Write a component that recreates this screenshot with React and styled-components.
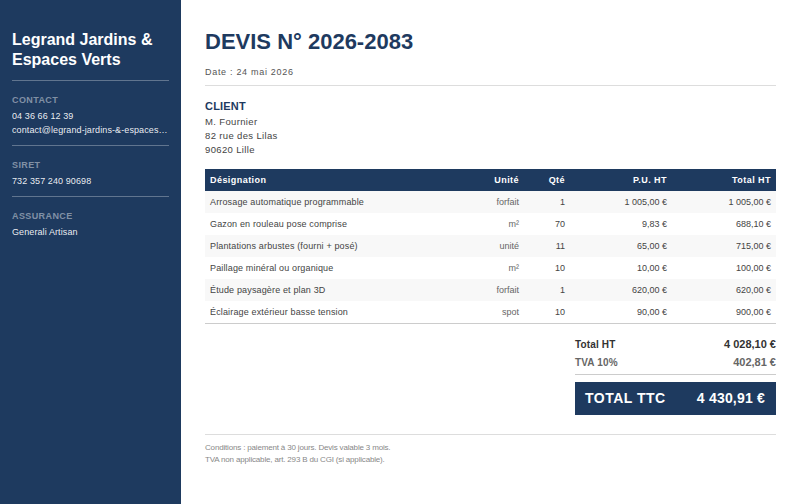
import React from 'react';
import styled, { createGlobalStyle } from 'styled-components';

const navy = '#1e3a5f';

const GlobalStyle = createGlobalStyle`
html, body { margin: 0; padding: 0; background: #fff; }
body { font-family: "Liberation Sans", Arial, sans-serif; }
* { box-sizing: border-box; }
`;

const Page = styled.div`
display: flex;
width: 800px;
height: 504px;
overflow: hidden;
`;

const Sidebar = styled.aside`
width: 181px;
flex-shrink: 0;
background: ${navy};
color: #fff;
padding: 30px 12px 0;
`;

const Company = styled.h2`
margin: 0;
font-size: 16px;
line-height: 20px;
font-weight: 700;
letter-spacing: 0;
padding-bottom: 10px;
`;

const SideBlock = styled.section`
border-top: 1px solid rgba(255, 255, 255, 0.3);
padding: 14px 0 7.5px;
`;

const SideLabel = styled.div`
font-size: 9px;
line-height: 11px;
font-weight: 700;
letter-spacing: 0.4px;
color: rgba(255, 255, 255, 0.45);
margin-bottom: 3px;
`;

const SideLine = styled.div`
font-size: 9px;
line-height: 14.4px;
letter-spacing: 0.1px;
color: rgba(255, 255, 255, 0.92);
white-space: nowrap;
overflow: hidden;
text-overflow: ellipsis;
`;

const Main = styled.main`
flex: 1;
min-width: 0;
padding: 28px 24px 0;
color: #333;
`;

const Title = styled.h1`
margin: 0;
font-size: 22px;
line-height: 28px;
font-weight: 700;
color: ${navy};
`;

const DateLine = styled.div`
font-size: 9px;
line-height: 12px;
letter-spacing: 0.7px;
color: #555;
margin-top: 10px;
padding-bottom: 7px;
border-bottom: 1px solid #ddd;
`;

const Client = styled.section`
margin-top: 14px;
`;

const ClientTitle = styled.div`
font-size: 11px;
line-height: 13px;
font-weight: 700;
letter-spacing: 0.2px;
color: ${navy};
margin-bottom: 2px;
`;

const ClientLine = styled.div`
font-size: 9.5px;
line-height: 14px;
letter-spacing: 0.35px;
color: #444;
`;

const Table = styled.table`
width: 100%;
margin-top: 12px;
border-collapse: collapse;
table-layout: fixed;
border-bottom: 1px solid #ccc;
`;

const Th = styled.th`
height: 22px;
padding: 0 5px;
background: ${navy};
color: #fff;
font-size: 9px;
font-weight: 700;
letter-spacing: 0.45px;
text-align: ${(p) => (p.$left ? 'left' : 'right')};
width: ${(p) => p.$w || 'auto'};
`;

const Row = styled.tr`
background: ${(p) => (p.$odd ? '#f8f8f8' : '#fff')};
`;

const Td = styled.td`
height: 22px;
padding: 0 5px;
font-size: 9px;
letter-spacing: ${(p) => (p.$left ? '0.15px' : '0')};
color: ${(p) => (p.$muted ? '#666' : '#444')};
text-align: ${(p) => (p.$left ? 'left' : 'right')};
white-space: nowrap;
`;

const Totals = styled.section`
width: 201px;
margin: 11px 0 0 auto;
`;

const TotalRow = styled.div`
display: flex;
justify-content: space-between;
align-items: baseline;
height: 18px;
padding-top: 3px;
font-size: 10px;
font-weight: 700;
letter-spacing: 0.15px;
color: ${(p) => (p.$sub ? '#666' : '#333')};
`;

const TotalAmount = styled.span`
font-size: 11px;
letter-spacing: 0;
`;

const TotalSep = styled.div`
border-top: 1px solid #ccc;
margin-top: 3px;
`;

const GrandTotal = styled.div`
display: flex;
justify-content: space-between;
align-items: center;
height: 33px;
margin-top: 7px;
padding: 0 11px 0 10px;
background: ${navy};
color: #fff;
font-size: 14px;
font-weight: 700;
letter-spacing: 0.5px;
`;

const GrandAmount = styled.span`
letter-spacing: 0.2px;
`;

const Footer = styled.footer`
margin-top: 19px;
padding-top: 7px;
border-top: 1px solid #ddd;
font-size: 8px;
line-height: 12px;
letter-spacing: -0.17px;
color: #888;
`;

const lines = [
  ['Arrosage automatique programmable', 'forfait', '1', '1 005,00 €', '1 005,00 €'],
  ['Gazon en rouleau pose comprise', 'm²', '70', '9,83 €', '688,10 €'],
  ['Plantations arbustes (fourni + posé)', 'unité', '11', '65,00 €', '715,00 €'],
  ['Paillage minéral ou organique', 'm²', '10', '10,00 €', '100,00 €'],
  ['Étude paysagère et plan 3D', 'forfait', '1', '620,00 €', '620,00 €'],
  ['Éclairage extérieur basse tension', 'spot', '10', '90,00 €', '900,00 €'],
];

export default function App() {
  return (
    <>
      <GlobalStyle />
      <Page>
        <Sidebar>
          <Company>Legrand Jardins &amp; Espaces Verts</Company>
          <SideBlock>
            <SideLabel>CONTACT</SideLabel>
            <SideLine>04 36 66 12 39</SideLine>
            <SideLine>contact@legrand-jardins-&amp;-espaces-verts.fr</SideLine>
          </SideBlock>
          <SideBlock>
            <SideLabel>SIRET</SideLabel>
            <SideLine>732 357 240 90698</SideLine>
          </SideBlock>
          <SideBlock>
            <SideLabel>ASSURANCE</SideLabel>
            <SideLine>Generali Artisan</SideLine>
          </SideBlock>
        </Sidebar>
        <Main>
          <Title>DEVIS N° 2026-2083</Title>
          <DateLine>Date : 24 mai 2026</DateLine>
          <Client>
            <ClientTitle>CLIENT</ClientTitle>
            <ClientLine>M. Fournier</ClientLine>
            <ClientLine>82 rue des Lilas</ClientLine>
            <ClientLine>90620 Lille</ClientLine>
          </Client>
          <Table>
            <thead>
              <tr>
                <Th $left>Désignation</Th>
                <Th $w="60px">Unité</Th>
                <Th $w="46px">Qté</Th>
                <Th $w="102px">P.U. HT</Th>
                <Th $w="104px">Total HT</Th>
              </tr>
            </thead>
            <tbody>
              {lines.map((l, i) => (
                <Row key={l[0]} $odd={i % 2 === 0}>
                  <Td $left>{l[0]}</Td>
                  <Td $muted>{l[1]}</Td>
                  <Td>{l[2]}</Td>
                  <Td>{l[3]}</Td>
                  <Td>{l[4]}</Td>
                </Row>
              ))}
            </tbody>
          </Table>
          <Totals>
            <TotalRow>
              <span>Total HT</span>
              <TotalAmount>4 028,10 €</TotalAmount>
            </TotalRow>
            <TotalRow $sub>
              <span>TVA 10%</span>
              <TotalAmount>402,81 €</TotalAmount>
            </TotalRow>
            <TotalSep />
            <GrandTotal>
              <span>TOTAL TTC</span>
              <GrandAmount>4 430,91 €</GrandAmount>
            </GrandTotal>
          </Totals>
          <Footer>
            Conditions : paiement à 30 jours. Devis valable 3 mois.
            <br />
            TVA non applicable, art. 293 B du CGI (si applicable).
          </Footer>
        </Main>
      </Page>
    </>
  );
}
